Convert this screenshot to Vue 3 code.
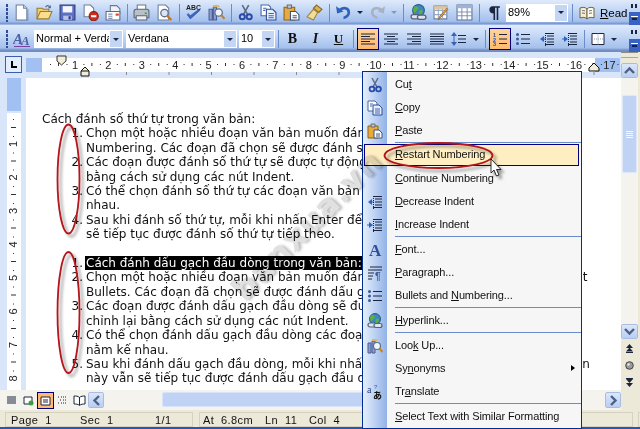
<script setup>
const row1 = [
  { w: 23, i: "new" }, { w: 23, i: "open" }, { w: 23, i: "save" }, { w: 23, i: "perm" }, { w: 23, i: "mail" },
  { w: 5, sep: true },
  { w: 23, i: "print" }, { w: 23, i: "preview" },
  { w: 6, sep: true },
  { w: 23, i: "spell" }, { w: 23, i: "research" },
  { w: 6, sep: true },
  { w: 23, i: "cut" }, { w: 23, i: "copy" }, { w: 23, i: "paste" }, { w: 23, i: "painter" },
  { w: 7, sep: true },
  { w: 20, i: "undo" }, { w: 14, arrow: true },
  { w: 20, i: "redo" }, { w: 13, arrow: true, off: true },
  { w: 7, sep: true },
  { w: 23, i: "link" }, { w: 23, i: "tables" }, { w: 23, i: "table" },
  { w: 6, sep: true },
  { w: 23, i: "pilcrow" },
];

const row2a = [
  { w: 23, t: "B", cls: "glyph-b" }, { w: 23, t: "I", cls: "glyph-i" }, { w: 23, t: "U", cls: "glyph-u" },
  { w: 6, sep: true },
  { w: 1 },
  { w: 22, i: "aleft", on: true }, { w: 23, i: "acenter" }, { w: 23, i: "aright" }, { w: 23, i: "ajust" },
  { w: 22, i: "spacing" }, { w: 12, arrow: true },
  { w: 7, sep: true },
  { w: 22, i: "numbers", on: true }, { w: 24, i: "bullets" }, { w: 23, i: "outdent" }, { w: 23, i: "indent" },
  { w: 6, sep: true },
  { w: 21, i: "borders" }, { w: 12, arrow: true },
];

const menu = [
  { i: "cut", a: "Cu", u: "t", b: "" },
  { i: "copy", a: "", u: "C", b: "opy" },
  { i: "paste", a: "", u: "P", b: "aste" },
  { sep: true },
  { a: "", u: "R", b: "estart Numbering", hot: true },
  { a: "", u: "C", b: "ontinue Numbering" },
  { i: "outdent", a: "", u: "D", b: "ecrease Indent" },
  { i: "indent", a: "", u: "I", b: "ncrease Indent" },
  { sep: true },
  { i: "font", a: "", u: "F", b: "ont..." },
  { i: "para", a: "", u: "P", b: "aragraph..." },
  { i: "bullets", a: "Bullets and ", u: "N", b: "umbering..." },
  { sep: true },
  { i: "link", a: "", u: "H", b: "yperlink..." },
  { sep: true },
  { i: "research", a: "Loo", u: "k", b: " Up..." },
  { a: "Sy", u: "n", b: "onyms", more: true },
  { i: "translate", a: "Tr", u: "a", b: "nslate" },
  { sep: true },
  { a: "", u: "S", b: "elect Text with Similar Formatting" },
];

const list1 = [
  { n: "1.", l: ["Chọn một hoặc nhiều đoạn văn bản muốn đánh số thứ tự rồi nhấn nút", "Numbering. Các đoạn đã chọn sẽ được đánh số thứ tự."] },
  { n: "2.", l: ["Các đoạn được đánh số thứ tự sẽ được tự động điều chỉnh", "bằng cách sử dụng các nút Indent."] },
  { n: "3.", l: ["Có thể chọn đánh số thứ tự các đoạn văn bản không nằm kế", "nhau."] },
  { n: "4.", l: ["Sau khi đánh số thứ tự, mỗi khi nhấn Enter để xuống dòng", "sẽ tiếp tục được đánh số thứ tự tiếp theo."] },
];

const list2 = [
  { n: "1.", sel: true, l: ["Cách đánh dấu gạch đầu dòng trong văn bản:"] },
  { n: "2.", l: ["Chọn một hoặc nhiều đoạn văn bản muốn đánh dấu gạch đầu dòng và nhấn tại nút", "Bullets. Các đoạn đã chọn sẽ được đánh dấu gạch đầu dòng."] },
  { n: "3.", l: ["Các đoạn được đánh dấu gạch đầu dòng sẽ được tự động", "chỉnh lại bằng cách sử dụng các nút Indent."] },
  { n: "4.", l: ["Có thể chọn đánh dấu gạch đầu dòng các đoạn văn bản không", "nằm kế nhau."] },
  { n: "5.", l: ["Sau khi đánh dấu gạch đầu dòng, mỗi khi nhấn Enter để xuống dòng thì ở đoạn văn", "này vẫn sẽ tiếp tục được đánh dấu gạch đầu dòng tiếp theo."] },
];

// thước ngang: mỗi đơn vị 33.4px
const unit = 33.4;
const hx = (n) => 75 + (n - 1) * unit;
const nums = Array.from({ length: 17 }, (_, i) => i + 1);
const vnums = Array.from({ length: 8 }, (_, i) => i + 1);
const tabs = Array.from({ length: 12 }, (_, i) => i);
</script>

<template>
  <div class="word">
    <!-- bộ icon dùng chung -->
    <svg class="defs" width="0" height="0">
      <defs>
        <symbol id="new" viewBox="0 0 16 16"><path d="M3 1h7l3 3v11H3z" fill="#fff" stroke="#6f7f9c"/><path d="M10 1v3h3" fill="#d5def0" stroke="#6f7f9c"/><path d="M14 5v11H5" fill="none" stroke="#7f93b8"/></symbol>
        <symbol id="open" viewBox="0 0 16 16"><path d="M1 14V4h5l1 1h5v2" fill="#f4cd72" stroke="#9b7a2c"/><path d="M1 14l3-7h11l-3 7z" fill="#fbdd8f" stroke="#9b7a2c"/><path d="M9 3c1-2 3-2 4 0" fill="none" stroke="#4a6a98"/><path d="M14 1v3h-3z" fill="#4a6a98"/></symbol>
        <symbol id="save" viewBox="0 0 16 16"><path d="M1 1h14v14H1z" fill="#5c6fc2" stroke="#2d3a82"/><path d="M3.500 2h9v6h-9z" fill="#f3f5fb"/><path d="M4 11h8v4H4z" fill="#b9c3e4"/><path d="M9 11.500h2v3H9z" fill="#2d3a82"/></symbol>
        <symbol id="perm" viewBox="0 0 16 16"><path d="M2 1h6l3 3v8H2z" fill="#fff" stroke="#6f7f9c"/><circle cx="11" cy="11.500" r="4.300" fill="#d22b17" stroke="#8d1c10"/><path d="M8.500 11.500h5" stroke="#fff" stroke-width="2"/></symbol>
        <symbol id="mail" viewBox="0 0 16 16"><path d="M5 1.500h6l3 3V9H5z" fill="#eef2f8" stroke="#6b7a94"/><path d="M1 7h13v8H1z" fill="#fff" stroke="#5d6a85"/><path d="M3 9.500h4M3 11.500h4M3 13.500h4" stroke="#8493ac"/><path d="M10 9h3v2h-3z" fill="#d54a2a"/></symbol>
        <symbol id="print" viewBox="0 0 16 16"><path d="M4 1h8v5H4z" fill="#fff" stroke="#717a88"/><path d="M1 7c0-1 1-2 2-2h10c1 0 2 1 2 2v6H1z" fill="#b9c0c9" stroke="#5d6572"/><path d="M3 11h10v4H3z" fill="#eef0f3" stroke="#5d6572"/><path d="M11 8h2v1.500h-2z" fill="#28b028"/></symbol>
        <symbol id="preview" viewBox="0 0 16 16"><path d="M2 1h7l3 3v11H2z" fill="#fff" stroke="#6f7f9c"/><circle cx="8" cy="8.500" r="3.500" fill="#d8e6f6" stroke="#5f6f88" stroke-width="1.200"/><path d="M10.500 11l4 4" stroke="#c9711e" stroke-width="2"/></symbol>
        <symbol id="spell" viewBox="0 0 16 16"><text x="8" y="6" text-anchor="middle" font-family="Liberation Sans, sans-serif" font-size="6.500" font-weight="700" fill="#222">ABC</text><path d="M2 10l3 4 9-8-1-1-8 6-2-2z" fill="#3c66c4" stroke="#24458f" stroke-width=".5"/></symbol>
        <symbol id="research" viewBox="0 0 16 16"><path d="M1 5h3v10H1zM5 3h3v12H5z" fill="#8b9dd1" stroke="#4d5d93"/><path d="M5 1h5l1 2H5z" fill="#d9b768"/><circle cx="10" cy="8" r="3.500" fill="#eef4fc" stroke="#5f6f88" stroke-width="1.200"/><path d="M12.500 10.500l3 3.500" stroke="#c9811e" stroke-width="2"/></symbol>
        <symbol id="cut" viewBox="0 0 16 16"><path d="M5 1l5 9M11 1L6 10" stroke="#5b6b84" stroke-width="1.500" fill="none"/><circle cx="5" cy="12" r="2.400" fill="none" stroke="#2a49a8" stroke-width="1.800"/><circle cx="11.500" cy="12" r="2.400" fill="none" stroke="#2a49a8" stroke-width="1.800"/></symbol>
        <symbol id="copy" viewBox="0 0 16 16"><path d="M1 1h7l2 2v8H1z" fill="#fff" stroke="#4668a8"/><path d="M6 5h6l3 3v7H6z" fill="#e6eefb" stroke="#2c4d95"/><path d="M8 9h5M8 11h5M8 13h5M3 4h3M3 6h2" stroke="#3f63b0"/></symbol>
        <symbol id="paste" viewBox="0 0 16 16"><path d="M1 3h10v12H1z" fill="#e8a93f" stroke="#8d6318"/><path d="M4 1h4v3H4z" fill="#bfc6d1" stroke="#6b6b6b"/><path d="M7 7h5l3 3v5H7z" fill="#fff" stroke="#39527f"/><path d="M9 11h4M9 13h4" stroke="#39527f"/></symbol>
        <symbol id="painter" viewBox="0 0 16 16"><path d="M10 1l5 4-3 3-5-4z" fill="#d9b45a" stroke="#85671e"/><path d="M7 5l4 3-4 7-6-3z" fill="#f2dc9d" stroke="#a0843a"/></symbol>
        <symbol id="undo" viewBox="0 0 16 16"><path d="M4 6c3-3 9-3 9 2 0 3-3 5-5 5" fill="none" stroke="#2f62b8" stroke-width="2.500"/><path d="M1 2l1 7 6-2z" fill="#2f62b8"/></symbol>
        <symbol id="redo" viewBox="0 0 16 16"><path d="M12 6C9 3 3 3 3 8c0 3 3 5 5 5" fill="none" stroke="#a8b2c2" stroke-width="2.500"/><path d="M15 2l-1 7-6-2z" fill="#a8b2c2"/></symbol>
        <symbol id="link" viewBox="0 0 16 16"><circle cx="8" cy="6" r="5.500" fill="#3d85c6" stroke="#275a8c"/><path d="M5 2c2 0 3 1 3 2S6 6 5 8 3 6 3 5 4 2 5 2zM9 6c2-1 3 0 3 1s-1 2-2 3-2-3-1-4z" fill="#5cb13d"/><rect x="1" y="10" width="8" height="4" rx="2" fill="#dfe5ee" stroke="#55617a" stroke-width="1.200"/><rect x="7" y="10.500" width="8" height="4" rx="2" fill="#dfe5ee" stroke="#55617a" stroke-width="1.200"/></symbol>
        <symbol id="tables" viewBox="0 0 16 16"><path d="M1 2h12v12H1z" fill="#fff" stroke="#6d7f9e"/><path d="M1 6h12M5 2v12M9 2v12M1 10h12" stroke="#9aa9c2"/><path d="M1 2h12v3H1z" fill="#d9c7a4"/><path d="M14 5L7 13l-2 2 1-3 7-8z" fill="#e9a23c" stroke="#8f5d12" stroke-width=".7"/></symbol>
        <symbol id="table" viewBox="0 0 16 16"><path d="M1 1h14v14H1z" fill="#fff" stroke="#5f7196"/><path d="M1 1h14v3H1z" fill="#9cb2d8"/><path d="M1 7.500h14M1 11h14M5.500 4v11M10.500 4v11" stroke="#7f93b8"/></symbol>
        <symbol id="pilcrow" viewBox="0 0 16 16"><path d="M7 2h7v1.500h-1.500V15H11V3.500H9.500V15H8V9C3 9 3 2 7 2z" fill="#1c2540"/></symbol>
        <symbol id="book" viewBox="0 0 16 16"><path d="M1 3c3-1 5-1 7 1v10c-2-2-4-2-7-1z" fill="#f6ecd2" stroke="#6c6347"/><path d="M15 3c-3-1-5-1-7 1v10c2-2 4-2 7-1z" fill="#fff9e8" stroke="#6c6347"/><path d="M3 5.500c1 0 2 0 3 .5M3 8c1 0 2 0 3 .5M10 6c1-.5 2-.5 3-.5M10 8.500c1-.5 2-.5 3-.5" stroke="#7b7b8a"/></symbol>
        <symbol id="aa" viewBox="0 0 18 18"><text x="0" y="14" font-family="Liberation Serif, serif" font-style="italic" font-size="15" font-weight="700" fill="#4d62a8">A</text><text x="8" y="15" font-family="Liberation Serif, serif" font-style="italic" font-size="13" font-weight="700" fill="#4d62a8">A</text><path d="M1 16.500h16" stroke="#7a3f9e"/></symbol>
        <symbol id="aleft" viewBox="0 0 16 16"><path d="M1 3h14M1 5.500h9M1 8h14M1 10.500h9M1 13h14" stroke="#1c2540"/></symbol>
        <symbol id="acenter" viewBox="0 0 16 16"><path d="M1 3h14M4 5.500h8M1 8h14M4 10.500h8M1 13h14" stroke="#1c2540"/></symbol>
        <symbol id="aright" viewBox="0 0 16 16"><path d="M1 3h14M6 5.500h9M1 8h14M6 10.500h9M1 13h14" stroke="#1c2540"/></symbol>
        <symbol id="ajust" viewBox="0 0 16 16"><path d="M1 3h14M1 5.500h14M1 8h14M1 10.500h14M1 13h14" stroke="#1c2540"/></symbol>
        <symbol id="spacing" viewBox="0 0 16 16"><path d="M7 4.500h8M7 8h8M7 11.500h8" stroke="#1c2540"/><path d="M3 1l3 4H0zM3 15l3-4H0z" fill="#3a62b4"/><path d="M3 5v6" stroke="#3a62b4"/></symbol>
        <symbol id="numbers" viewBox="0 0 16 16"><path d="M7 3.500h8M7 8h8M7 12.500h8" stroke="#1c2540"/><text x="1" y="6" font-family="Liberation Sans, sans-serif" font-size="5.500" font-weight="700" fill="#2c4da0">1</text><text x="1" y="10.500" font-family="Liberation Sans, sans-serif" font-size="5.500" font-weight="700" fill="#2c4da0">2</text><text x="1" y="15" font-family="Liberation Sans, sans-serif" font-size="5.500" font-weight="700" fill="#2c4da0">3</text></symbol>
        <symbol id="bullets" viewBox="0 0 16 16"><path d="M6 3.500h9M6 8h9M6 12.500h9" stroke="#1c2540"/><circle cx="2.500" cy="3.500" r="1.500" fill="#3a5a9a"/><circle cx="2.500" cy="8" r="1.500" fill="#3a5a9a"/><circle cx="2.500" cy="12.500" r="1.500" fill="#3a5a9a"/></symbol>
        <symbol id="outdent" viewBox="0 0 16 16"><path d="M6 2.500h9M8 5h7M8 8h7M8 11h7M6 13.500h9" stroke="#1c2540"/><path d="M1 8l4-3v6z" fill="#2f62b8"/><path d="M4 8h3" stroke="#2f62b8"/><path d="M6.500 2v13" stroke="#1c2540" stroke-dasharray="1 1"/></symbol>
        <symbol id="indent" viewBox="0 0 16 16"><path d="M6 2.500h9M8 5h7M8 8h7M8 11h7M6 13.500h9" stroke="#1c2540"/><path d="M6 8L2 5v6z" fill="#2f62b8"/><path d="M0 8h3" stroke="#2f62b8"/><path d="M6.500 2v13" stroke="#1c2540" stroke-dasharray="1 1"/></symbol>
        <symbol id="borders" viewBox="0 0 16 16"><path d="M2 2.500h12v11H2z" fill="#fff" stroke="#1c2540"/><path d="M2 8h12M8 2.500v11" stroke="#8a97ad" stroke-dasharray="1 1"/></symbol>
        <symbol id="font" viewBox="0 0 16 16"><text x="8" y="14" text-anchor="middle" font-family="Liberation Serif, serif" font-size="17" font-weight="700" fill="#2c4f9e">A</text></symbol>
        <symbol id="para" viewBox="0 0 16 16"><path d="M3 2h12M1 5h14M1 8h6M1 11h5M1 14h4" stroke="#1c2540"/><text x="8" y="15" font-family="Liberation Sans, sans-serif" font-size="10" font-weight="700" fill="#3a5a9a">¶</text></symbol>
        <symbol id="translate" viewBox="0 0 16 16"><text x="0" y="9" font-family="Liberation Serif, serif" font-size="10" fill="#28407a">a</text><text x="7" y="5" font-family="Liberation Sans, sans-serif" font-size="6" fill="#2f62b8">?</text><text x="6" y="15" font-family="Noto Sans CJK JP, sans-serif" font-size="9" font-weight="700" fill="#111">あ</text></symbol>
      </defs>
    </svg>

    <div class="bar">
      <i class="grip"></i>
      <template v-for="(it, k) in row1" :key="k">
        <span v-if="it.sep" class="sep" :style="{ width: it.w + 'px' }"></span>
        <span v-else-if="it.arrow" class="tri-cell" :class="{ off: it.off }" :style="{ width: it.w + 'px' }"><b class="tri"></b></span>
        <span v-else class="btn" :style="{ width: it.w + 'px' }"><svg width="17" height="17"><use :href="'#' + it.i" /></svg></span>
      </template>
      <span class="combo zoom-box"><span class="combo-text">89%</span><span class="combo-arrow"><b class="tri"></b></span></span>
      <span class="sep sep-read"></span>
      <span class="read"><svg width="16" height="16"><use href="#book" /></svg><span><u>R</u>ead</span></span>
      <span class="chev"><i class="chev-top"></i><i class="chev-bot"></i></span>
    </div>

    <div class="bar bar2">
      <i class="grip"></i>
      <span class="btn w23"><svg width="18" height="18"><use href="#aa" /></svg></span>
      <span class="combo style-box"><span class="combo-text">Normal + Verdana</span><span class="combo-arrow"><b class="tri"></b></span></span>
      <span class="combo font-box"><span class="combo-text">Verdana</span><span class="combo-arrow"><b class="tri"></b></span></span>
      <span class="combo size-box"><span class="combo-text">10</span><span class="combo-arrow"><b class="tri"></b></span></span>
      <span class="sep w6"></span>
      <template v-for="(it, k) in row2a" :key="k">
        <span v-if="it.sep" class="sep" :style="{ width: it.w + 'px' }"></span>
        <span v-else-if="it.arrow" class="tri-cell" :style="{ width: it.w + 'px' }"><b class="tri"></b></span>
        <span v-else-if="it.t" class="btn" :class="it.cls" :style="{ width: it.w + 'px' }">{{ it.t }}</span>
        <span v-else-if="it.i" class="btn" :class="{ on: it.on }" :style="{ width: it.w + 'px' }"><svg width="16" height="16"><use :href="'#' + it.i" /></svg></span>
        <span v-else :style="{ width: it.w + 'px' }"></span>
      </template>
      <span class="chev"><i class="chev-top"></i><i class="chev-bot"></i></span>
    </div>

    <div class="main">
      <div class="left">
        <div class="hruler-row">
          <span class="l-box"><i></i></span>
          <svg class="hruler" width="599" height="26" viewBox="22 0 599 26">
            <rect x="26" y="6" width="594" height="14" fill="#a3c0f2" />
            <rect x="42" y="6" width="553" height="14" fill="#fff" />
            <g v-for="n in nums" :key="n">
              <text :x="hx(n)" y="17" text-anchor="middle" class="rnum">{{ n }}</text>
              <rect :x="hx(n) - 25" y="12" width="1" height="1" fill="#333" />
              <rect :x="hx(n) - 17" y="11" width="1" height="3" fill="#333" />
              <rect :x="hx(n) - 8.500" y="12" width="1" height="1" fill="#333" />
            </g>
            <rect :x="hx(17) + 8" y="12" width="1" height="1" fill="#333" />
            <rect v-for="t in tabs" :key="t" :x="126 + t * 42.500" y="20" width="1" height="3" fill="#8a8a8a" />
            <path d="M57 4h9v5l-4.500 4-4.500-4z" fill="#f2edd8" stroke="#333" />
            <path d="M81 19l4-4 4 4v5h-8z" fill="#f2edd8" stroke="#111" />
            <path d="M81 19h8" stroke="#111" />
            <path d="M594 11l-5 5v3h10v-3z" fill="#f2edd8" stroke="#111" />
          </svg>
        </div>

        <div class="doc-row">
          <svg class="vruler" width="26" height="312" viewBox="0 78 26 312">
            <rect x="7" y="78" width="14" height="33" fill="#a3c0f2" />
            <rect x="7" y="113" width="14" height="277" fill="#fff" />
            <g v-for="n in vnums" :key="n">
              <text :x="13" :y="110.500 + n * 33.500 + 4" text-anchor="middle" class="rnum" :transform="`rotate(-90 13 ${110.500 + n * 33.500})`">{{ n }}</text>
              <rect x="13" :y="110.500 + n * 33.500 - 25" width="1" height="1" fill="#333" />
              <rect x="11" :y="110.500 + n * 33.500 - 17" width="5" height="1" fill="#333" />
              <rect x="13" :y="110.500 + n * 33.500 - 8" width="1" height="1" fill="#333" />
            </g>
          </svg>
          <div class="doc">
            <div class="line">Cách đánh số thứ tự trong văn bản:</div>
            <template v-for="item in list1" :key="item.n">
              <div v-for="(t, i) in item.l" :key="i" class="li">
                <span class="num">{{ i === 0 ? item.n : "" }}</span><span>{{ t }}</span>
              </div>
            </template>
            <div class="line">&nbsp;</div>
            <template v-for="item in list2" :key="item.n">
              <div v-for="(t, i) in item.l" :key="i" class="li">
                <span class="num">{{ i === 0 ? item.n : "" }}</span><span :class="{ sel: item.sel }">{{ t }}</span>
              </div>
            </template>
          </div>
        </div>

        <div class="view-row">
          <span class="view-btns">
            <span class="vbtn"><svg width="13" height="13" viewBox="0 0 13 13"><path d="M2 3h9M2 5h9M2 7h9M2 9h9" stroke="#1c2540"/></svg></span>
            <span class="vbtn"><svg width="13" height="13" viewBox="0 0 13 13"><path d="M2 3h8v7H2z" fill="#fff" stroke="#1c2540"/><circle cx="9" cy="9" r="2.500" fill="#3d9c3d"/></svg></span>
            <span class="vbtn on"><svg width="13" height="13" viewBox="0 0 13 13"><path d="M2 3h9v8H2z" fill="#fff" stroke="#1c2540"/><path d="M4 6h5M4 8h5" stroke="#1c2540"/></svg></span>
            <span class="vbtn"><svg width="13" height="13" viewBox="0 0 13 13"><path d="M2 3h2M5 3h6M4 6h2M7 6h4M2 9h2M5 9h6" stroke="#1c2540" stroke-dasharray="1 1"/></svg></span>
            <span class="vbtn"><svg width="13" height="13" viewBox="0 0 13 13"><path d="M1 2c2 0 4 0 5.500 1.500C8 2 10 2 12 2v8c-2 0-4 0-5.500 1.500C5 10 3 10 1 10z" fill="#fff" stroke="#1c2540"/><path d="M6.500 3v8" stroke="#1c2540"/></svg></span>
          </span>
          <span class="sb-btn"><svg width="9" height="11" viewBox="0 0 9 11"><path d="M7 1L2.500 5.500 7 10" fill="none" stroke="#4d6185" stroke-width="2.400"/></svg></span>
          <span class="h-track"><span class="h-thumb"></span></span>
          <span class="sb-btn"><svg width="9" height="11" viewBox="0 0 9 11"><path d="M2 1l4.500 4.500L2 10" fill="none" stroke="#4d6185" stroke-width="2.400"/></svg></span>
        </div>
      </div>

      <div class="vbar">
        <span class="split"></span>
        <span class="sb-btn up"><svg width="11" height="9" viewBox="0 0 11 9"><path d="M1 7l4.500-4.500L10 7" fill="none" stroke="#4d6185" stroke-width="2.400"/></svg></span>
        <span class="v-track">
          <span class="v-thumb"><i></i><i></i><i></i><i></i></span>
        </span>
        <span class="sb-btn up"><svg width="11" height="9" viewBox="0 0 11 9"><path d="M1 2l4.500 4.500L10 2" fill="none" stroke="#4d6185" stroke-width="2.400"/></svg></span>
        <span class="browse">
          <svg width="9" height="9" viewBox="0 0 9 9"><path d="M4.500 0L8 4H1zM4.500 3.500L8 7.500H1z" fill="#1c2540"/><path d="M1 8.500h7" stroke="#1c2540"/></svg>
          <svg width="9" height="9" viewBox="0 0 9 9"><circle cx="4.500" cy="4.500" r="3.800" fill="#9a9a9a" stroke="#444"/><circle cx="3.500" cy="3.500" r="1.200" fill="#e6e6e6"/></svg>
          <svg width="9" height="9" viewBox="0 0 9 9"><path d="M1 .5h7" stroke="#1c2540"/><path d="M4.500 5L8 1H1zM4.500 9L8 5H1z" fill="#1c2540"/></svg>
        </span>
      </div>
    </div>

    <div class="status">
      <span class="st st-a">
        <span class="c c1">Page&nbsp; 1</span><span class="c c2">Sec&nbsp; 1</span><span class="c c3">1/1</span>
      </span>
      <span class="st st-b">
        <span class="c c4">At&nbsp; 6.8cm</span><span class="c c5">Ln&nbsp; 11</span><span class="c c6">Col&nbsp; 4</span>
      </span>
      <span class="st st-c"></span>
      <span class="st st-d"></span>
    </div>

    <div class="menu">
      <template v-for="(m, k) in menu" :key="k">
        <div v-if="m.sep" class="menu-sep"></div>
        <div v-else class="menu-item" :class="{ hot: m.hot }">
          <span class="menu-ico"><svg v-if="m.i" width="16" height="16"><use :href="'#' + m.i" /></svg></span>
          <span class="menu-text">{{ m.a }}<u>{{ m.u }}</u>{{ m.b }}</span>
          <b v-if="m.more" class="more"></b>
        </div>
      </template>
    </div>

    <!-- watermark nằm đè lên cả menu -->
    <div class="watermark">banxua.vn</div>

    <!-- các vòng đỏ và con trỏ vẽ đè lên ảnh -->
    <svg class="marks" width="640" height="429" viewBox="0 0 640 429">
      <defs>
        <filter id="sh" x="-40%" y="-40%" width="200%" height="200%">
          <feDropShadow dx="3" dy="3" stdDeviation="1.500" flood-color="#000" flood-opacity=".4" />
        </filter>
      </defs>
      <g fill="none" stroke="#b3161b" stroke-width="1.800" filter="url(#sh)">
        <ellipse cx="68.500" cy="179" rx="11" ry="54.500" />
        <ellipse cx="68.500" cy="312.500" rx="11" ry="60.500" />
        <ellipse cx="438.500" cy="155.500" rx="54" ry="12.500" />
      </g>
      <path d="M491 159v14l3-3 2.500 6 2.500-1-2.500-5.500h4.500z" fill="#fff" stroke="#000" stroke-width=".8" filter="url(#sh)" />
    </svg>
  </div>
</template>

<style scoped>
.word {
  position: relative;
  width: 640px;
  height: 429px;
  overflow: hidden;
  background: #ece9d8;
  font-family: "Liberation Sans", sans-serif;
  display: flex;
  flex-direction: column;
}
.defs {
  position: absolute;
}
.bar {
  display: flex;
  align-items: center;
  height: 25px;
  flex-shrink: 0;
  background: linear-gradient(#dfeafb, #c3d7f5 40%, #a4c0ec 85%, #7293d4 96%, #c9d9f3);
}
.bar2 {
  height: 27px;
  padding-top: 1px;
  box-sizing: border-box;
  background: linear-gradient(#dfeafb, #c3d7f5 40%, #a4c0ec 85%, #6e8fd0 93%, #8a8a8a);
}
.grip {
  width: 10px;
  height: 18px;
  flex-shrink: 0;
  background: radial-gradient(circle at 7px 1.500px, #2f4f95 1.200px, transparent 1.400px) 0 0 / 10px 4px;
}
.btn {
  height: 22px;
  flex-shrink: 0;
  display: flex;
  align-items: center;
  justify-content: center;
  box-sizing: border-box;
}
.btn.on {
  background: linear-gradient(#ffd49a, #ffb970);
  border: 1px solid #000080;
}
.w23 {
  width: 23px;
}
.w6 {
  width: 6px;
}
.sep {
  height: 18px;
  flex-shrink: 0;
  background: linear-gradient(#6a8ccb, #6a8ccb) center / 1px 100% no-repeat;
}
.sep-read {
  width: 8px;
}
.tri-cell {
  display: flex;
  align-items: center;
  justify-content: center;
  flex-shrink: 0;
  height: 22px;
}
.tri {
  display: block;
  width: 0;
  height: 0;
  border-left: 3.500px solid transparent;
  border-right: 3.500px solid transparent;
  border-top: 3.500px solid #1c2540;
}
.tri-cell.off .tri {
  border-top-color: #8a98b5;
}
.combo {
  height: 18px;
  background: #fff;
  display: flex;
  flex-shrink: 0;
  box-sizing: border-box;
  font-size: 11px;
  color: #000;
}
.combo-text {
  flex: 1;
  min-width: 0;
  overflow: hidden;
  white-space: nowrap;
  padding-left: 2px;
  line-height: 17px;
}
.combo-arrow {
  width: 12px;
  display: flex;
  align-items: center;
  justify-content: center;
  background: #c4d6f4;
  margin: 1px;
}
.zoom-box {
  width: 62px;
  margin-left: 1px;
}
.style-box {
  width: 89px;
  margin-left: 1px;
}
.font-box {
  width: 111px;
  margin-left: 3px;
}
.size-box {
  width: 36px;
  margin-left: 2px;
}
.read {
  display: flex;
  align-items: center;
  gap: 5px;
  font-size: 11.500px;
  color: #000;
  margin-left: 3px;
}
.chev {
  width: 11px;
  height: 100%;
  margin-left: auto;
  flex-shrink: 0;
  display: flex;
  flex-direction: column;
  align-items: center;
  justify-content: space-around;
  background: linear-gradient(transparent 50%, #3b62c2 50%);
}
.chev-top {
  width: 7px;
  height: 4px;
  background: repeating-linear-gradient(90deg, #1c2540 0 2px, transparent 2px 4px);
}
.chev-bot {
  width: 7px;
  height: 5px;
  border-top: 1px solid #fff;
  background: linear-gradient(#10204d, #10204d) center 1px / 5px 2px no-repeat;
  box-sizing: border-box;
}
.glyph-b {
  font: 700 14px "Liberation Serif", serif;
  color: #111;
}
.glyph-i {
  font: italic 700 14px "Liberation Serif", serif;
  color: #111;
}
.glyph-u {
  font: 700 13px "Liberation Serif", serif;
  color: #111;
  text-decoration: underline;
}
.main {
  flex: 1;
  min-height: 0;
  display: flex;
}
.left {
  width: 621px;
  display: flex;
  flex-direction: column;
  flex-shrink: 0;
}
.hruler-row {
  height: 26px;
  flex-shrink: 0;
  display: flex;
  background: #d9e6fa;
  padding-left: 5px;
  box-sizing: border-box;
}
.l-box {
  width: 17px;
  height: 17px;
  margin-top: 4px;
  box-sizing: border-box;
  border: 1px solid #3b5ea8;
  background: #e3edfc;
  position: relative;
  flex-shrink: 0;
}
.l-box i {
  position: absolute;
  left: 5px;
  top: 4px;
  width: 6px;
  height: 7px;
  border-left: 2px solid #000;
  border-bottom: 2px solid #000;
  box-sizing: border-box;
}
.hruler,
.vruler {
  display: block;
  flex-shrink: 0;
}
.rnum {
  font: 11px "Liberation Sans", sans-serif;
  fill: #222;
}
.doc-row {
  flex: 1;
  min-height: 0;
  display: flex;
  background: #d9e6fa;
  overflow: hidden;
}
.doc {
  flex: 1;
  min-width: 0;
  background: #fff;
  padding: 34px 0 0 16px;
  overflow: hidden;
  font-family: "DejaVu Sans", Verdana, sans-serif;
  font-size: 12px;
  line-height: 14.4px;
  color: #111;
  white-space: nowrap;
}
.li {
  display: flex;
}
.num {
  width: 41px;
  padding-right: 3px;
  text-align: right;
  flex-shrink: 0;
}
.sel {
  background: #000;
  color: #fff;
  padding-left: 1px;
  margin-left: -1px;
  display: block;
  width: 300px;
}
.view-row {
  height: 20px;
  flex-shrink: 0;
  display: flex;
  align-items: center;
  background: #f4f3ee;
}
.view-btns {
  display: flex;
  width: 88px;
  flex-shrink: 0;
  padding-left: 3px;
  box-sizing: border-box;
}
.vbtn {
  width: 17px;
  height: 17px;
  display: flex;
  align-items: center;
  justify-content: center;
  box-sizing: border-box;
}
.vbtn.on {
  background: #ffb970;
  border: 1px solid #000080;
}
.sb-btn {
  width: 16px;
  height: 16px;
  flex-shrink: 0;
  display: flex;
  align-items: center;
  justify-content: center;
  box-sizing: border-box;
  background: linear-gradient(#dbe7fb, #b9cef3);
  border: 1px solid #fff;
  outline: 1px solid #a8bde0;
  outline-offset: -1px;
  border-radius: 2px;
}
.h-track {
  flex: 1;
  height: 16px;
  background: #f4f3ee;
  position: relative;
  overflow: hidden;
}
.h-thumb {
  display: block;
  position: absolute;
  left: 58px;
  width: 300px;
  top: 0;
  height: 15px;
  background: #c1d3f5;
  border: 1px solid #d9e4fa;
  box-sizing: border-box;
  border-radius: 2px;
}
.vbar {
  width: 19px;
  flex-shrink: 0;
  display: flex;
  flex-direction: column;
  align-items: center;
  background: #ece9d8;
  padding-right: 2px;
  box-sizing: border-box;
}
.split {
  width: 100%;
  height: 6px;
  flex-shrink: 0;
  background: #ece9d8;
  border-top: 1px solid #8a8a8a;
  border-bottom: 1px solid #aca899;
  box-sizing: border-box;
  margin-bottom: 5px;
}
.sb-btn.up {
  width: 17px;
  height: 15px;
}
.v-track {
  flex: 1;
  width: 100%;
  background: #f4f3ee;
  padding-top: 17px;
  box-sizing: border-box;
}
.v-thumb {
  display: flex;
  flex-direction: column;
  align-items: center;
  justify-content: center;
  gap: 1px;
  height: 78px;
  width: 15px;
  margin: 0 auto;
  background: #c1d3f5;
  border: 1px solid #dfe8fb;
  border-radius: 2px;
  box-sizing: border-box;
}
.v-thumb i {
  width: 7px;
  height: 1px;
  background: #f3f7ff;
}
.browse {
  height: 71px;
  display: flex;
  flex-direction: column;
  align-items: center;
  justify-content: flex-start;
  gap: 8px;
  padding-top: 5px;
  box-sizing: border-box;
  flex-shrink: 0;
}
.status {
  height: 19px;
  flex-shrink: 0;
  display: flex;
  gap: 6px;
  padding: 2px 0 2px 5px;
  box-sizing: border-box;
  background: #ece9d8;
  font-size: 11px;
  letter-spacing: 0.4px;
  color: #111;
  border-bottom: 2px solid #2a55b5;
}
.st {
  display: flex;
  align-items: center;
  height: 15px;
  border: 1px solid #d5d2c2;
  box-sizing: border-box;
  flex-shrink: 0;
  white-space: nowrap;
}
.st-a {
  width: 188px;
}
.st-b {
  width: 190px;
}
.st-c {
  width: 239px;
  margin-left: -1px;
  margin-right: -1px;
  flex: none;
}
.st-d {
  width: 10px;
}
.c1 {
  margin-left: 5px;
  width: 69px;
}
.c2 {
  width: 75px;
}
.c4 {
  margin-left: 3px;
  width: 62px;
}
.c5 {
  width: 44px;
}
.watermark {
  position: absolute;
  left: 237px;
  top: 275px;
  font: 700 32px "DejaVu Sans", sans-serif;
  letter-spacing: 1px;
  color: #e0e0e0;
  text-shadow: 2px 2px 3px #bcbcbc;
  transform: rotate(-45deg);
  transform-origin: 0 50%;
  mix-blend-mode: multiply;
  pointer-events: none;
  white-space: nowrap;
  line-height: 40px;
}
.menu {
  position: absolute;
  left: 362px;
  top: 71px;
  width: 220px;
  height: 358px;
  box-sizing: border-box;
  border: 1px solid #002d96;
  padding-top: 1px;
  background: linear-gradient(90deg, #e6effd 0, #92b2e6 24px, #f6f6f6 24px);
  font-size: 11px;
  letter-spacing: -0.12px;
  color: #111;
}
.menu-item {
  height: 23px;
  display: flex;
  align-items: center;
  box-sizing: border-box;
  position: relative;
  white-space: nowrap;
}
.menu-text {
  margin-bottom: 2px;
}
.menu-item.hot {
  background: #ffeec2;
  border: 1px solid #000080;
  margin: 0 2px 1px 1px;
  height: 22px;
}
.menu-item.hot .menu-ico {
  width: 30px;
}
.menu-ico {
  width: 32px;
  flex-shrink: 0;
  display: flex;
  align-items: center;
  padding-left: 4px;
  box-sizing: border-box;
}
.menu-sep {
  height: 2px;
  margin-left: 32px;
  border-top: 1px solid #6a8ccb;
  box-sizing: border-box;
}
.more {
  position: absolute;
  right: 6px;
  top: 8px;
  width: 0;
  height: 0;
  border-top: 3.500px solid transparent;
  border-bottom: 3.500px solid transparent;
  border-left: 4px solid #000;
}
.marks {
  position: absolute;
  left: 0;
  top: 0;
  pointer-events: none;
}
</style>

<style>
html,
body {
  margin: 0;
  background: #ece9d8;
}
</style>
